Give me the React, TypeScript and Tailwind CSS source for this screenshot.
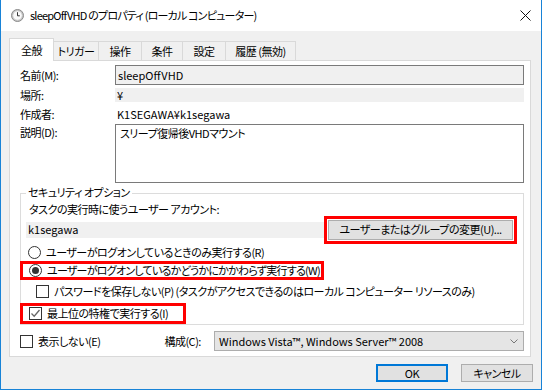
import React from "react";

const TABS = [
  { label: "全般", w: "w-[45px]", active: true },
  { label: "トリガー", w: "w-[45px]" },
  { label: "操作", w: "w-[43px]" },
  { label: "条件", w: "w-[41px]" },
  { label: "設定", w: "w-[43px]" },
  { label: "履歴 (無効)", w: "w-[70px]" },
];

function Radio({ checked }: { checked?: boolean }) {
  return (
    <span className="w-[13px] h-[13px] rounded-full border border-[#333] bg-white flex items-center justify-center shrink-0">
      {checked && <span className="w-[7px] h-[7px] rounded-full bg-[#333]" />}
    </span>
  );
}

function Check({ checked }: { checked?: boolean }) {
  return (
    <span className="w-[13px] h-[13px] border border-[#333] bg-white flex items-center justify-center shrink-0">
      {checked && (
        <svg width="11" height="11" viewBox="0 0 11 11">
          <polyline points="1.5,5.5 4.2,8.2 9.5,2" fill="none" stroke="#666" strokeWidth="1.3" />
        </svg>
      )}
    </span>
  );
}

function ClockIcon() {
  return (
    <svg width="13" height="13" viewBox="0 0 13 13">
      <circle cx="6.5" cy="6.5" r="6" fill="#c8c8c8" stroke="#8a8a8a" />
      <circle cx="6.5" cy="6.5" r="4.3" fill="#fafafa" />
      <polyline points="6.5,3.2 6.5,6.8 8.8,6.8" fill="none" stroke="#333" strokeWidth="1" />
    </svg>
  );
}

export default function App() {
  return (
    <div
      className="w-[542px] h-[390px] bg-[#f0f0f0] border-x border-b border-[#1883d7] flex flex-col text-[11px] tracking-[-0.5px] text-black leading-none whitespace-nowrap [font-feature-settings:'palt']"
      style={{ fontFamily: "'Noto Sans CJK JP', 'Noto Sans', sans-serif" }}
    >
      {/* title bar */}
      <div className="h-[31px] bg-white flex items-center pl-[10px] pr-[10px] shrink-0">
        <ClockIcon />
        <span className="ml-[6px] text-[11px] tracking-[-0.8px]">sleepOffVHD のプロパティ (ローカル コンピューター)</span>
        <svg className="ml-auto" width="11" height="11" viewBox="0 0 11 11">
          <path d="M0.5,0.5 L10.5,10.5 M10.5,0.5 L0.5,10.5" stroke="#111" strokeWidth="1" />
        </svg>
      </div>

      <div className="flex-1 flex flex-col pl-[8px]">
        {/* tabs */}
        <div className="flex items-end h-[29px] relative z-10">
          {TABS.map((t) =>
            t.active ? (
              <div key={t.label} className={`${t.w} h-[23px] -mb-px bg-white border border-b-0 border-[#d9d9d9] flex items-center justify-center`}>
                {t.label}
              </div>
            ) : (
              <div key={t.label} className={`${t.w} h-[19px] bg-[#f0f0f0] border border-l-0 border-b-0 border-[#d9d9d9] flex items-center justify-center`}>
                {t.label}
              </div>
            )
          )}
        </div>

        {/* panel */}
        <div className="w-[522px] h-[297px] bg-white border border-[#d9d9d9] flex flex-col pl-[10px] pr-[6px]">
          <div className="mt-[4px] h-[20px] flex items-center">
            <span className="w-[95px]">名前(M):</span>
            <div className="flex-1 h-full border border-[#7a7a7a] bg-[#f0f0f0] flex items-center pl-[2px] tracking-normal">sleepOffVHD</div>
          </div>
          <div className="mt-[3px] h-[14px] flex items-center">
            <span className="w-[95px]">場所:</span>
            <div className="flex-1 h-full bg-[#f0f0f0] flex items-center pl-[2px]">¥</div>
          </div>
          <div className="mt-[3px] h-[18px] flex items-center">
            <span className="w-[95px]">作成者:</span>
            <span className="pl-[2px] tracking-normal">K1SEGAWA¥k1segawa</span>
          </div>
          <div className="mt-[1px] h-[59px] flex">
            <span className="w-[95px] pt-[3px]">説明(D):</span>
            <div className="flex-1 h-full border border-[#7a7a7a] bg-white pl-[4px] pt-[3px]">スリープ復帰後VHDマウント</div>
          </div>

          {/* security options */}
          <div className="mt-[10px] h-[132px] border border-[#dcdcdc] relative flex flex-col">
            <span className="absolute -top-[7px] left-[5px] bg-white px-[2px]">セキュリティ オプション</span>
            <div className="mt-[10px] h-[12px] flex items-center pl-[8px]">タスクの実行時に使うユーザー アカウント:</div>
            <div className="h-[28px] flex items-center pl-[5px] pr-[6px]">
              <div className="flex-1 h-[16px] bg-[#f0f0f0] flex items-center pl-[2px] tracking-normal">k1segawa</div>
              <div className="w-[193px] h-[28px] border-[3px] border-[#ff0000] p-px">
                <div className="h-full bg-[#e1e1e1] border border-[#adadad] flex items-center justify-center">ユーザーまたはグループの変更(U)...</div>
              </div>
            </div>
            <div className="h-[16px] mt-[1px] flex items-center pl-[7px] gap-[5px]">
              <Radio />
              <span>ユーザーがログオンしているときのみ実行する(R)</span>
            </div>
            <div className="h-[20px] mt-[1px] -ml-px w-[304px] border-[3px] border-[#ff0000] flex items-center pl-[6px] gap-[5px]">
              <Radio checked />
              <span className="tracking-[-0.75px]">ユーザーがログオンしているかどうかにかかわらず実行する(W)</span>
            </div>
            <div className="h-[17px] mt-[3px] flex items-center pl-[15px] gap-[5px]">
              <Check />
              <span>パスワードを保存しない(P) (タスクがアクセスできるのはローカル コンピューター リソースのみ)</span>
            </div>
            <div className="h-[22px] mt-[3px] -ml-px w-[166px] border-[3px] border-[#ff0000] flex items-center pl-[6px] gap-[5px]">
              <Check checked />
              <span>最上位の特権で実行する(I)</span>
            </div>
          </div>

          {/* bottom row */}
          <div className="mt-[6px] h-[20px] flex items-center">
            <Check />
            <span className="ml-[5px]">表示しない(E)</span>
            <span className="ml-[64px]">構成(C):</span>
            <div className="ml-auto w-[310px] h-full bg-[#e5e5e5] border border-[#adadad] flex items-center pl-[4px] pr-[5px]">
              <span className="tracking-normal">Windows Vista™, Windows Server™ 2008</span>
              <svg className="ml-auto" width="8" height="5" viewBox="0 0 8 5">
                <polyline points="0.5,0.5 4,4 7.5,0.5" fill="none" stroke="#777" strokeWidth="1" />
              </svg>
            </div>
          </div>
        </div>

        {/* buttons */}
        <div className="mt-[7px] flex justify-end gap-[13px] pr-[8px]">
          <div className="w-[72px] h-[18px] bg-[#e1e1e1] border-2 border-[#0078d7] flex items-center justify-center">OK</div>
          <div className="w-[72px] h-[18px] bg-[#e1e1e1] border border-[#adadad] flex items-center justify-center">キャンセル</div>
        </div>
      </div>
    </div>
  );
}
